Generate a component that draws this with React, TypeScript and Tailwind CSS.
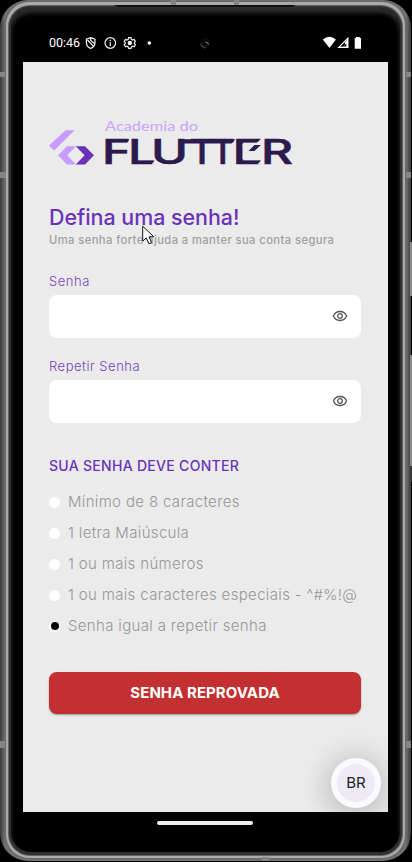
import React from "react";

function Logo() {
  return (
    <svg className="-ml-1 block shrink-0" width="260" height="60" viewBox="45 112 260 60" role="img" aria-label="Academia do Flutter">
      <path d="M65.5 130.3H74.6L54.2 150.6L49 145.6Z" fill="#c99bff" />
      <path d="M58 155.2L66.8 146.2H76L74.5 147.7L67.2 155.2L76 164.4H66.8Z" fill="#c99bff" />
      <path d="M75.8 146.2H85L94 155.2L85 164.4H75.8L84.6 155.2Z" fill="#6a32b9" />
      <text x="105" y="130.5" textLength="93" lengthAdjust="spacingAndGlyphs" fontSize="14" fill="#cba3fb" className="font-['Lato',sans-serif]">Academia do</text>
      <g fill="#2b1a4d" stroke="#2b1a4d" strokeWidth="0.6" fontSize="33.4" fontWeight="500" className="font-['Inter',sans-serif]">
        <text x="102" y="163.8" textLength="29" lengthAdjust="spacingAndGlyphs">F</text>
        <text x="128" y="163.8" textLength="28" lengthAdjust="spacingAndGlyphs">L</text>
        <text x="151" y="163.8" textLength="37" lengthAdjust="spacingAndGlyphs">U</text>
        <text x="189.5" y="163.8" textLength="25" lengthAdjust="spacingAndGlyphs">T</text>
        <text x="211" y="163.8" textLength="23.5" lengthAdjust="spacingAndGlyphs">T</text>
        <text x="232.5" y="163.8" textLength="31" lengthAdjust="spacingAndGlyphs">E</text>
        <text x="261" y="163.8" textLength="32" lengthAdjust="spacingAndGlyphs">R</text>
      </g>
      <path d="M179 139.3H235.5L231.500 143.4H179Z" fill="#2b1a4d" />
      <path d="M242.500 144H255.500L261.500 138.500H263V159H242.500Z" fill="#ebebeb" />
      <path d="M254.500 145H260.800L254.500 151H248.500Z" fill="#2b1a4d" />
      <path d="M131 138.500L126 144H131ZM156 159L151.500 164.500H156ZM262.500 159L257.500 164.500H262.500Z" fill="#ebebeb" />
    </svg>
  );
}

function EyeIcon() {
  return (
    <svg width="16" height="12" viewBox="0 0 16 12" fill="none" stroke="#555" strokeWidth="1.3">
      <path d="M1.400 6C2.600 3.100 5 1.500 8 1.500S13.400 3.100 14.600 6C13.400 8.900 11 10.500 8 10.500S2.600 8.900 1.400 6Z" />
      <circle cx="8" cy="6" r="2.300" />
    </svg>
  );
}

function Field({ label }: { label: string }) {
  return (
    <label className="flex flex-col gap-[5px]">
      <span className="text-[13px] leading-[18px] tracking-[0.52px] font-[350] text-[#7743bd]">{label}</span>
      <span className="flex h-[42.500px] items-center justify-end rounded-lg bg-white pr-[13px]">
        <EyeIcon />
      </span>
    </label>
  );
}

function StatusBar() {
  return (
    <header className="flex h-[50px] items-center px-[38px] pt-3 text-white">
      <span className="w-9 whitespace-nowrap font-['Roboto',sans-serif] text-[12.500px] leading-4">00:46</span>
      <svg width="70" height="14" viewBox="85 36 70 14" fill="none" stroke="#f2f2f2" strokeWidth="1.200">
        <path d="M90.700 37.600L95 39.100V42.500C95 45.600 93.300 47.500 90.700 48.400C88.100 47.500 86.400 45.600 86.400 42.500V39.100ZM87.500 40L93.500 46.400M90.700 37.600V40.500L94.500 43.500" />
        <circle cx="110.300" cy="43" r="5.300" />
        <path d="M110.300 42.200V46M110.300 39.800V41.200" />
        <path d="M128.600 37.700H131L131.400 39.300L132.700 40L134.200 39.500L135.400 41.500L134.300 42.700V43.500L135.400 44.600L134.200 46.700L132.700 46.200L131.400 46.900L131 48.400H128.600L128.200 46.900L126.900 46.200L125.400 46.700L124.200 44.600L125.300 43.500V42.700L124.200 41.500L125.400 39.500L126.900 40L128.200 39.300Z" />
        <circle cx="129.800" cy="43" r="1.600" fill="white" />
        <circle cx="149.300" cy="43" r="1.800" fill="white" stroke="none" />
      </svg>
      <svg className="ml-[43px]" width="14" height="14" viewBox="0 0 14 14">
        <circle cx="7" cy="7" r="5.500" fill="#0a0a0a" />
        <path d="M3 7.500A4.200 4.200 0 0 0 8 11.500" fill="none" stroke="#3c3a3c" strokeWidth="1.600" />
        <path d="M7.500 6.300Q10 6 10.500 8.300" fill="none" stroke="#9b7775" strokeWidth="1.200" />
      </svg>
      <svg className="ml-auto" width="40" height="14" viewBox="323 36 40 14">
        <path d="M323.800 39.600Q330.300 34 336.900 39.600L330.500 48Z" fill="white" />
        <path d="M339.800 47.400L348.900 38.200V47.400Z" fill="none" stroke="white" strokeWidth="1.200" />
        <path d="M343.500 47.500L346 44.700V42L349 39V48Z" fill="white" />
        <path d="M347.300 43.500V46.500H344.600Z" fill="black" />
        <path d="M357 37H360.700V38H362V48.700H355.700V38H357Z" fill="white" />
      </svg>
    </header>
  );
}

/* Side keys, antenna bands and the earpiece slit of the handset. */
function Hardware() {
  return (
    <svg className="pointer-events-none absolute inset-0" width="412" height="862" viewBox="0 0 412 862">
      <path d="M410 242H412V296H410ZM410 355H412V466H410Z" fill="#8b8b8b" />
      <path d="M410 466H412V482H410Z" fill="#3a3a3a" />
      <path d="M0 72H5V77H0ZM0 172H6V178H0ZM0 741H5V748H0ZM406 72H411V77H406ZM406 172H411V178H406ZM406 741H411V748H406ZM171 0H176V6H171ZM234 0H239V6H234ZM262 857H269V861H262Z" fill="#858585" />
      <path d="M114 5H296L292 7H118Z" fill="#101010" />
    </svg>
  );
}

function Cursor() {
  return (
    <svg className="absolute left-[142px] top-[225px]" width="13" height="21" viewBox="0 0 13 21">
      <path d="M.700 1.200V16.200L4.200 12.900L7 18.800L9.600 17.500L7 11.800H11.800Z" fill="white" stroke="#111" strokeWidth="1" />
    </svg>
  );
}

const rules = [
  { text: "Mínimo de 8 caracteres" },
  { text: "1 letra Maiúscula" },
  { text: "1 ou mais números" },
  { text: "1 ou mais caracteres especiais - ^#%!@" },
  { text: "Senha igual a repetir senha", met: true },
];

export default function App() {
  return (
    <div className="relative flex h-[862px] w-[412px] overflow-hidden bg-black pb-px pr-px font-['Inter',sans-serif]">
      <div className="flex grow rounded-[28px] bg-[linear-gradient(90deg,#3a3a3a,#707070_5px,#707070_406px,#3a3a3a)] px-[5px] pb-[2px] pt-px">
        <div className="flex grow rounded-[24px] bg-[#686868] p-px">
          <div className="flex grow rounded-[23px] bg-[#aaaaaa] px-[2px] pb-[2px] pt-[3px]">
            <div className="flex grow rounded-[22px] bg-[#606060] p-px">
              <div className="flex grow rounded-[21px] bg-[#303030] px-[2px] pb-[3px] pt-[2px]">
                <div className="flex grow flex-col items-center rounded-[20px] bg-black pt-[4px] shadow-[inset_0_5px_4px_#2c2c2c]">
                  <div className="w-full">
                    <StatusBar />
                  </div>
                  <main className="relative flex h-[750px] w-[365px] flex-col overflow-hidden bg-[#ebebeb] pb-[98px] pl-[26px] pr-[27px] pt-[50px]">
                    <Logo />
                    <h1 className="mt-8 whitespace-nowrap text-[21.400px] font-[450] leading-[26px] text-[#6a32b9]">Defina uma senha!</h1>
                    <p className="mb-[24px] mt-[2px] whitespace-nowrap text-[11.200px] font-[450] leading-[16px] tracking-[0.420px] text-[#a0a0a0]">Uma senha forte ajuda a manter sua conta segura</p>
                    <div className="flex flex-col gap-[19.500px]">
                      <Field label="Senha" />
                      <Field label="Repetir Senha" />
                    </div>
                    <h2 className="mt-[34px] whitespace-nowrap text-[14px] font-[450] leading-[18px] tracking-[0.300px] text-[#6a32b9]">SUA SENHA DEVE CONTER</h2>
                    <ul className="mt-[12px] flex flex-col">
                      {rules.map((rule) => (
                        <li key={rule.text} className="flex h-[31px] items-center gap-2">
                          <span className="flex size-[11px] shrink-0 items-center justify-center rounded-full bg-white">
                            {rule.met && <span className="size-2 rounded-full bg-black" />}
                          </span>
                          <span className="whitespace-nowrap text-[15px] font-light tracking-[0.340px] text-[#979797]">{rule.text}</span>
                        </li>
                      ))}
                    </ul>
                    <button className="mt-auto h-[42px] w-full shrink-0 rounded-lg bg-[#c33031] pt-px text-[15px] font-bold tracking-[0.060px] text-white shadow-[0_1px_2px_rgba(0,0,0,0.35)]">SENHA REPROVADA</button>
                    <div className="absolute bottom-[4px] right-[7px] flex size-[50px] items-center justify-center rounded-full border-[6px] border-[#faf9fd] bg-[#eeeaf6] pt-px text-[15px] text-[#202024] shadow-[0_4px_28px_6px_rgba(0,0,0,0.18)]">BR</div>
                  </main>
                  <div className="mr-[2px] mt-[9px] h-[4px] w-[96px] rounded-full bg-[#eeeeee]" />
                </div>
              </div>
            </div>
          </div>
        </div>
      </div>
      <Hardware />
      <Cursor />
    </div>
  );
}
